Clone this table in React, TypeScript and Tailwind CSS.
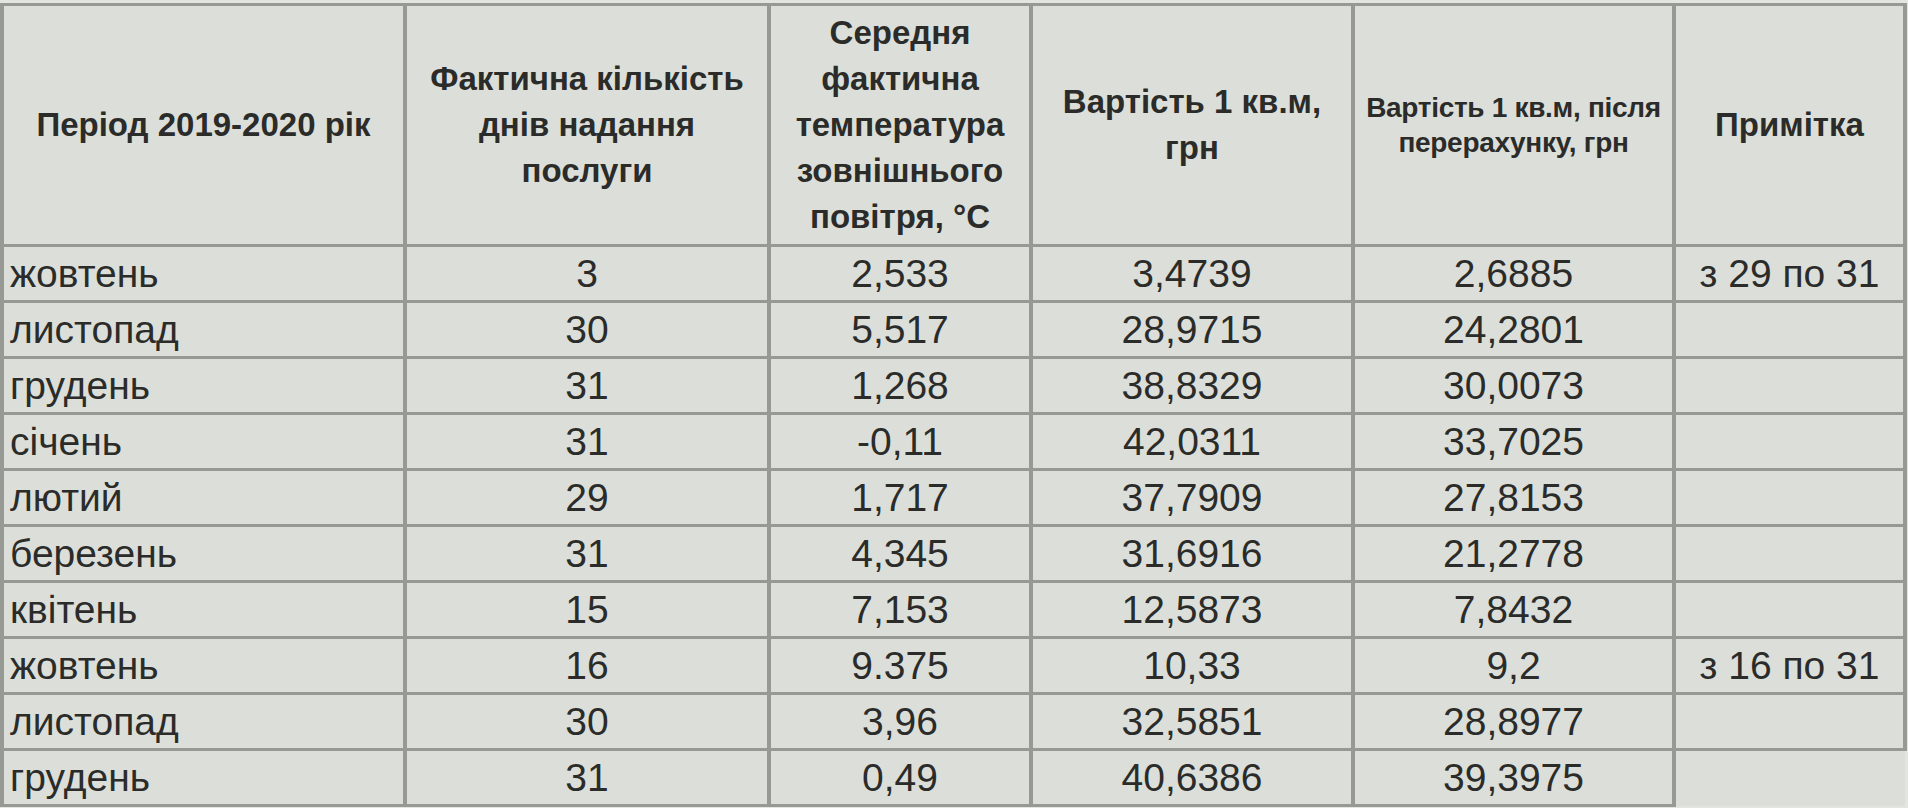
const ROWS = [
  { month: "жовтень", days: "3", temp: "2,533", cost: "3,4739", recalc: "2,6885", note: "з 29 по 31" },
  { month: "листопад", days: "30", temp: "5,517", cost: "28,9715", recalc: "24,2801", note: "" },
  { month: "грудень", days: "31", temp: "1,268", cost: "38,8329", recalc: "30,0073", note: "" },
  { month: "січень", days: "31", temp: "-0,11", cost: "42,0311", recalc: "33,7025", note: "" },
  { month: "лютий", days: "29", temp: "1,717", cost: "37,7909", recalc: "27,8153", note: "" },
  { month: "березень", days: "31", temp: "4,345", cost: "31,6916", recalc: "21,2778", note: "" },
  { month: "квітень", days: "15", temp: "7,153", cost: "12,5873", recalc: "7,8432", note: "" },
  { month: "жовтень", days: "16", temp: "9.375", cost: "10,33", recalc: "9,2", note: "з 16 по 31" },
  { month: "листопад", days: "30", temp: "3,96", cost: "32,5851", recalc: "28,8977", note: "" },
  { month: "грудень", days: "31", temp: "0,49", cost: "40,6386", recalc: "39,3975", note: "" },
];

const cell = "border-x-[4px] border-y-[3px] border-[#979a94] bg-[#dcdfd9] p-0 align-middle";
const head = `${cell} text-center font-bold text-[33px] leading-[46px]`;
const body = `${cell} h-[56px] text-[39px] leading-[44px] text-center`;

export default function App() {
  return (
    <div className="min-h-screen bg-[#e3e5e1] pt-[3px] font-['Liberation_Sans',Arial,sans-serif] text-[#2b2c2a]">
      <table className="w-[1903px] table-fixed border-collapse">
        <colgroup>
          <col className="w-[403px]" />
          <col className="w-[364px]" />
          <col className="w-[262px]" />
          <col className="w-[322px]" />
          <col className="w-[321px]" />
          <col className="w-[231px]" />
        </colgroup>
        <thead>
          <tr className="h-[241px]">
            <th className={head}>Період 2019-2020 рік</th>
            <th className={head}>
              Фактична кількість
              <br />
              днів надання
              <br />
              послуги
            </th>
            <th className={head}>
              Середня
              <br />
              фактична
              <br />
              температура
              <br />
              зовнішнього
              <br />
              повітря, °C
            </th>
            <th className={head}>
              Вартість 1 кв.м,
              <br />
              грн
            </th>
            <th className={`${cell} text-center font-bold text-[28px] leading-[35px] tracking-[-0.3px]`}>
              Вартість 1 кв.м, після
              <br />
              перерахунку, грн
            </th>
            <th className={head}>Примітка</th>
          </tr>
        </thead>
        <tbody>
          {ROWS.map((r, i) => {
            const last = i === ROWS.length - 1;
            return (
              <tr key={i} className="h-[56px]">
                <td className={`${body} !text-left pl-[6px]`}>{r.month}</td>
                <td className={body}>{r.days}</td>
                <td className={body}>{r.temp}</td>
                <td className={body}>{r.cost}</td>
                <td className={body}>{r.recalc}</td>
                <td
                  className={
                    last
                      ? "h-[56px] border-l-[4px] border-[#979a94] border-t-[3px] bg-[#dcdfd9] p-0"
                      : body
                  }
                >
                  {r.note}
                </td>
              </tr>
            );
          })}
        </tbody>
      </table>
    </div>
  );
}
